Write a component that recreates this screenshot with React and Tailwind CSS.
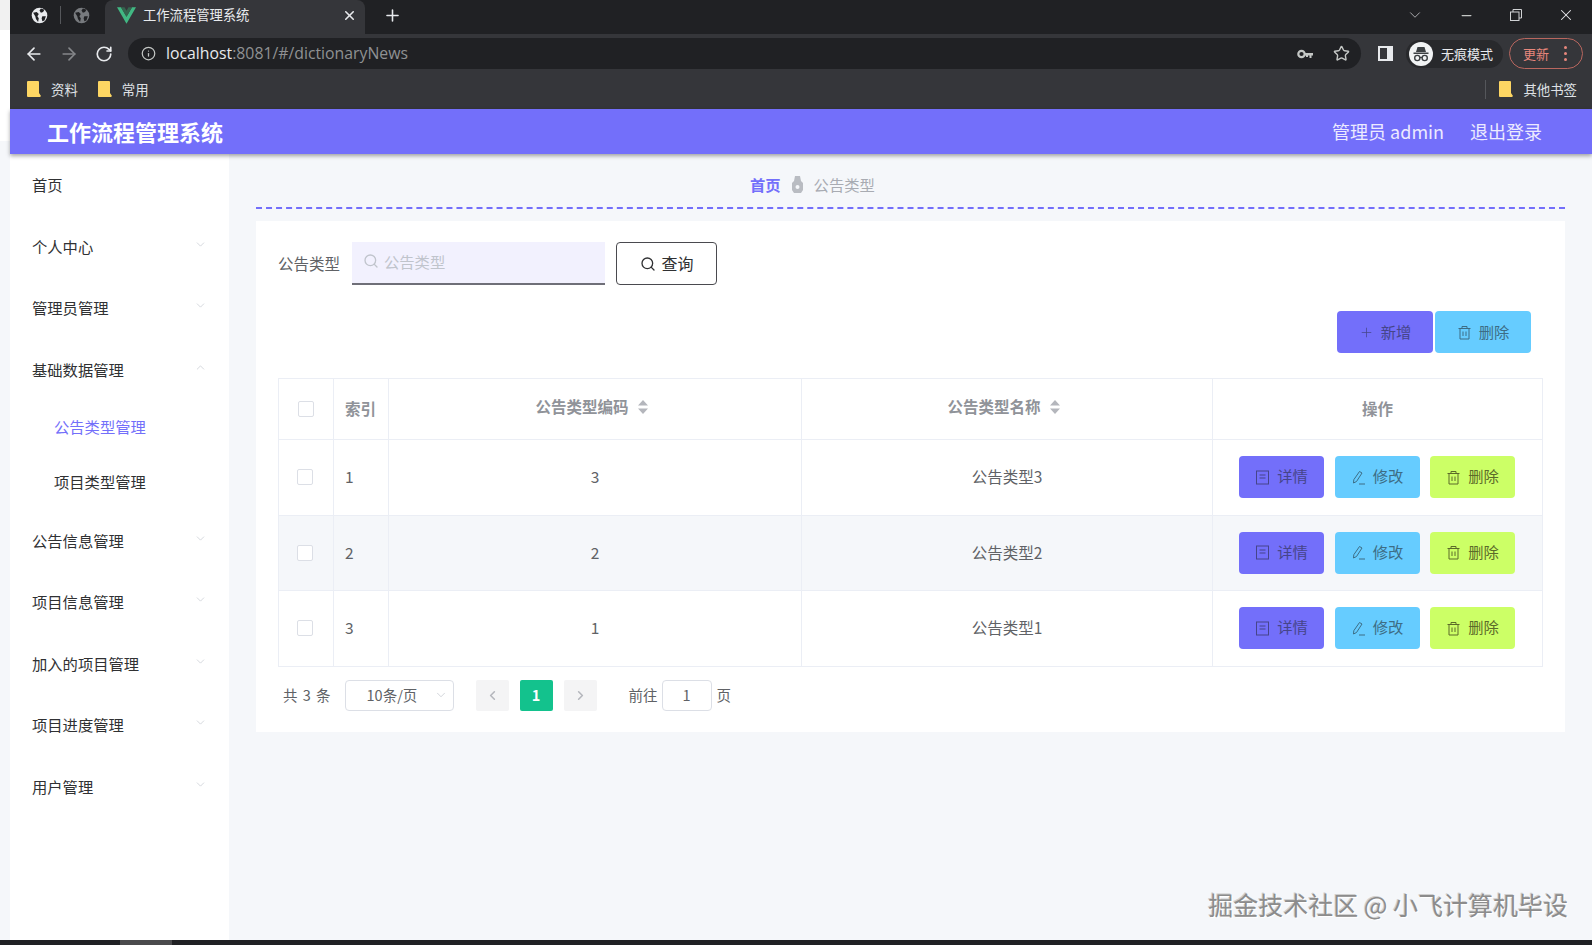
import React from "react";
import { ArrowLeft, ArrowRight, ChevronDown, ChevronLeft, ChevronRight, ChevronUp, Info, Minus, Plus, RotateCw, Search, Star, X } from "lucide-react";

const FONT = { fontFamily: '"Noto Sans CJK SC", "Noto Sans", sans-serif' };

const menus = [
    { name: "首页" },
    { name: "个人中心", arrow: true },
    { name: "管理员管理", arrow: true },
    { name: "基础数据管理", open: true },
    { name: "公告信息管理", arrow: true },
    { name: "项目信息管理", arrow: true },
    { name: "加入的项目管理", arrow: true },
    { name: "项目进度管理", arrow: true },
    { name: "用户管理", arrow: true },
];

const rows = [
    { id: 1, code: 3, name: "公告类型3" },
    { id: 2, code: 2, name: "公告类型2", stripe: true },
    { id: 3, code: 1, name: "公告类型1" },
];

const Globe = ({ color, cut }) => (
    <svg width="17" height="17" viewBox="0 0 24 24">
        <circle cx="12" cy="12" r="11" fill={color} />
        <path d="M3 8l5-1 3 3-2 3 2 3-1 5-3-4-1-4zM14 2l5 2-2 3-3 1-2-3zM16 13l5 0-2 6-3 1-1-4z" fill={cut} />
    </svg>
);

const VueLogo = () => (
    <svg width="19" height="17" viewBox="0 0 24 21">
        <path d="M0 0h5l7 12 7-12h5L12 21z" fill="#41b883" />
        <path d="M5 0h4.500L12 4.500 14.500 0H19l-7 12z" fill="#35654f" />
    </svg>
);

const Folder = () => (
    <svg width="14" height="16" viewBox="0 0 14 16">
        <path d="M0 1a1 1 0 0 1 1-1h10a1 1 0 0 1 1 1v11l2 3-1 1H1a1 1 0 0 1-1-1z" fill="#fdd663" />
    </svg>
);

const KeyIcon = () => (
    <svg width="16" height="10" viewBox="0 0 16 10">
        <circle cx="4.500" cy="5" r="3.200" fill="none" stroke="#c4c7c5" strokeWidth="2.200" />
        <path d="M8 4h8v2.500h-1.500V9h-2V6.500H11V8H9V6.500H8z" fill="#c4c7c5" />
    </svg>
);

const Incognito = () => (
    <svg width="24" height="24" viewBox="0 0 24 24">
        <circle cx="12" cy="12" r="12" fill="#f1f3f4" />
        <path d="M8.500 5h7l1.500 5H7z M4.500 10.500h15v1.500h-15z" fill="#3c4043" />
        <circle cx="8.300" cy="16" r="2.600" fill="none" stroke="#3c4043" strokeWidth="1.400" />
        <circle cx="15.700" cy="16" r="2.600" fill="none" stroke="#3c4043" strokeWidth="1.400" />
        <path d="M10.900 15.500h2.200" stroke="#3c4043" strokeWidth="1.200" />
    </svg>
);

const TicketIcon = ({ color }) => (
    <svg width="15" height="15" viewBox="0 0 15 15" fill="none" stroke={color} strokeWidth="1">
        <rect x="1.500" y="1" width="12" height="13" />
        <path d="M4.500 5h6M4.500 8h6" />
    </svg>
);

const EditIcon = ({ color }) => (
    <svg width="15" height="15" viewBox="0 0 15 15" fill="none" stroke={color} strokeWidth="1">
        <path d="M8.500 1.500l2.500 1.500-5.500 8.500-3 1.500 0.300-3.300zM8 14h6" />
    </svg>
);

const TrashIcon = ({ color }) => (
    <svg width="15" height="15" viewBox="0 0 15 15" fill="none" stroke={color} strokeWidth="1">
        <path d="M1.500 3.500h12M5 3.500V1.500h5v2M3 3.500V14h9V3.500M6 6.500v4.500M9 6.500v4.500" />
    </svg>
);

const BreadcrumbIcon = () => (
    <svg width="13" height="17" viewBox="0 0 13 17">
        <path d="M4 0h5l1 5 2 2v7l-2 3H3l-2-3V7l2-2z" fill="#b9bcc2" />
        <circle cx="6.500" cy="11" r="2" fill="#f5f7fa" />
    </svg>
);

const SortIcon = () => (
    <svg width="10" height="14" viewBox="0 0 10 14" className="ml-[9px]">
        <path d="M5 0l5 5.500H0zM0 8.500h10L5 14z" fill="#b4b6bc" />
    </svg>
);

const ActionButton = ({ bg, color, text, children }) => (
    <button className={`flex h-[42px] w-[85px] items-center justify-center gap-[7px] rounded-[4px] text-[15.300px] ${bg}`} style={{ color }}>
        {children}
        <span className="pb-[3px]">{text}</span>
    </button>
);

const Cell = ({ className, children }) => (
    <div className={`flex items-center justify-center border-r border-[#ebeef5] ${className || ""}`}>{children}</div>
);

const Checkbox = () => <span className="block h-[16px] w-[16px] rounded-[2px] border border-[#dcdfe6] bg-white" />;

const BrowserChrome = () => (
    <>
        {/* Tabs */}
        <div className="flex h-[34px] shrink-0 items-center bg-[#202124] text-[#e8eaed]">
            <div className="mb-[4px] ml-[21px]"><Globe color="#e8eaed" cut="#202124" /></div>
            <div className="mb-[4px] ml-[12px] h-[18px] w-px bg-[#55575b]" />
            <div className="mb-[4px] ml-[12px]"><Globe color="#777a7e" cut="#202124" /></div>
            <div className="ml-[15px] flex h-[34px] w-[260px] items-center rounded-t-[8px] bg-[#35363a] pb-[4px] pl-[12px]">
                <VueLogo />
                <span className="ml-[7px] text-[13.300px]">工作流程管理系统</span>
                <X size={15} strokeWidth={2.500} className="ml-[93px]" />
            </div>
            <Plus size={19} className="mb-[4px] ml-[18px]" />
            <div className="mb-[4px] ml-auto flex items-center">
                <ChevronDown size={18} strokeWidth={1.200} className="text-[#b5b7ba]" />
                <Minus size={15} className="ml-[35px] text-[#c4c7c5]" />
                <svg width="12" height="12" viewBox="0 0 12 12" fill="none" stroke="#d0d2d4" className="ml-[36px]">
                    <rect x="0.500" y="3" width="8.500" height="8.500" />
                    <path d="M3 3V0.500h8.500V9H9" />
                </svg>
                <X size={18} strokeWidth={1.400} className="mr-[17px] ml-[35px] text-[#e8eaed]" />
            </div>
        </div>
        {/* Address bar */}
        <div className="flex h-[41px] shrink-0 items-center bg-[#35363a] pb-[2px] text-[#e8eaed]">
            <ArrowLeft size={20} className="ml-[14px]" />
            <ArrowRight size={20} className="ml-[15px] text-[#85878a]" />
            <RotateCw size={18} strokeWidth={2.200} className="ml-[16px]" />
            <div className="ml-[15px] flex h-[31px] w-[1233px] items-center rounded-full bg-[#202124] pl-[13px]">
                <Info size={15} className="text-[#c4c7c5]" />
                <span className="ml-[10px] text-[15.800px]" style={{ fontFamily: '"Open Sans", sans-serif' }}>
                    localhost<span className="text-[#8f9193]">:8081/#/dictionaryNews</span>
                </span>
                <div className="ml-auto flex items-center pr-[11px]">
                    <KeyIcon />
                    <Star size={17} className="ml-[20px] text-[#c4c7c5]" />
                </div>
            </div>
            <div className="ml-[17px] flex h-[15px] w-[15px] border-2 border-[#e8eaed]">
                <div className="h-full w-[7px] bg-[#35363a]" />
                <div className="h-full flex-1 bg-[#e8eaed]" />
            </div>
            <div className="ml-[13px] flex h-[28px] w-[97px] items-center rounded-full bg-[#28292c] pl-[3px]">
                <Incognito />
                <span className="ml-[8px] text-[13px]">无痕模式</span>
            </div>
            <div className="ml-[6px] flex h-[31px] w-[74px] items-center rounded-full border border-[#b9675f] pl-[13px] text-[13px] text-[#e8877c]">
                更新
                <div className="ml-[15px] flex flex-col gap-[3px]">
                    <span className="h-[3px] w-[3px] rounded-full bg-[#e8877c]" />
                    <span className="h-[3px] w-[3px] rounded-full bg-[#e8877c]" />
                    <span className="h-[3px] w-[3px] rounded-full bg-[#e8877c]" />
                </div>
            </div>
        </div>
        {/* Bookmarks */}
        <div className="flex h-[34px] shrink-0 items-center bg-[#35363a] pb-[6px] text-[13.400px] text-[#dfe1e5]">
            <div className="ml-[17px]"><Folder /></div>
            <span className="ml-[10px]">资料</span>
            <div className="ml-[20px]"><Folder /></div>
            <span className="ml-[10px]">常用</span>
            <div className="ml-auto h-[19px] w-px bg-[#55575b]" />
            <div className="ml-[13px]"><Folder /></div>
            <span className="mr-[15px] ml-[10px]">其他书签</span>
        </div>
    </>
);

const Sidebar = () => (
    <div className="w-[219px] shrink-0 bg-white text-[15.300px] text-[#303133]">
        {menus.map((m) => (
            <div key={m.name}>
                <div className="flex h-[61.500px] items-center justify-between pr-[22px] pl-[22px]">
                    <span>{m.name}</span>
                    {m.arrow && <ChevronDown size={13} strokeWidth={1.200} className="mb-[4px] text-[#c0c4cc]" />}
                    {m.open && <ChevronUp size={13} strokeWidth={1.200} className="mb-[4px] text-[#c0c4cc]" />}
                </div>
                {m.open && (
                    <div className="pb-[1.500px]">
                        <div className="flex h-[54px] items-center pb-[2px] pl-[44px] text-[#736ffa]">公告类型管理</div>
                        <div className="flex h-[54px] items-center pl-[44px]">项目类型管理</div>
                    </div>
                )}
            </div>
        ))}
    </div>
);

const TableBlock = () => (
    <div className="border-t border-l border-[#ebeef5] text-[15.500px] text-[#606266]">
        <div className="grid h-[61px] grid-cols-[55px_55px_413px_411px_330px] border-b border-[#ebeef5] font-bold text-[#909399]">
            <Cell><Checkbox /></Cell>
            <Cell className="justify-start pl-[11px]">索引</Cell>
            <Cell className="pr-[7px] pb-[4px]">公告类型编码<SortIcon /></Cell>
            <Cell className="pr-[7px] pb-[4px]">公告类型名称<SortIcon /></Cell>
            <Cell>操作</Cell>
        </div>
        {rows.map((r) => (
            <div key={r.id} className={`grid h-[75.500px] grid-cols-[55px_55px_413px_411px_330px] border-b border-[#ebeef5] ${r.stripe ? "bg-[#f5f7fa]" : "bg-white"}`}>
                <Cell className="pr-[3px]"><Checkbox /></Cell>
                <Cell className="justify-start pb-[1px] pl-[11px]">{r.id}</Cell>
                <Cell className="pb-[1px]">{r.code}</Cell>
                <Cell className="pb-[1px]">{r.name}</Cell>
                <Cell className="gap-[10.500px] pr-[1px]">
                    <ActionButton bg="bg-[#736ffa]" color="#46458a" text="详情"><TicketIcon color="#46458a" /></ActionButton>
                    <ActionButton bg="bg-[#66ccff]" color="#3d6d85" text="修改"><EditIcon color="#3d6d85" /></ActionButton>
                    <ActionButton bg="bg-[#ccff66]" color="#5c6b2a" text="删除"><TrashIcon color="#5c6b2a" /></ActionButton>
                </Cell>
            </div>
        ))}
    </div>
);

const Pagination = () => (
    <div className="mt-[13px] flex h-[32px] items-center text-[14.500px] text-[#606266]">
        <span className="ml-[5px] pb-[2px] [word-spacing:2px]">共 3 条</span>
        <div className="ml-[14px] flex h-[31px] w-[109px] items-center rounded-[4px] border border-[#dcdfe6] pb-[2px] pl-[21px]">
            10条/页
            <ChevronDown size={14} strokeWidth={1.200} className="mr-[5px] ml-auto text-[#c0c4cc]" />
        </div>
        <div className="ml-[22px] flex h-[31px] w-[33px] items-center justify-center rounded-[2px] bg-[#f4f4f5] text-[#b4b6bc]"><ChevronLeft size={15} strokeWidth={2.500} /></div>
        <div className="ml-[11px] flex h-[31px] w-[33px] items-center justify-center rounded-[2px] bg-[#13c28d] pb-[2px] font-bold text-white">1</div>
        <div className="ml-[11px] flex h-[31px] w-[33px] items-center justify-center rounded-[2px] bg-[#f4f4f5] text-[#b4b6bc]"><ChevronRight size={15} strokeWidth={2.500} /></div>
        <span className="ml-[32px] pb-[2px]">前往</span>
        <div className="ml-[4px] flex h-[31px] w-[50px] items-center justify-center rounded-[4px] border border-[#dcdfe6] pb-[2px]">1</div>
        <span className="ml-[5px] pb-[2px]">页</span>
    </div>
);

const Content = () => (
    <div className="relative flex-1 bg-[#f5f7fa] pr-[28px] pl-[27px]">
        {/* Breadcrumb */}
        <div className="flex h-[55px] items-center border-b-2 border-dashed border-[#736ffa] pt-[8px] pl-[494px] text-[15.300px]">
            <span className="font-bold text-[#736ffa]">首页</span>
            <span className="mx-[10px]"><BreadcrumbIcon /></span>
            <span className="text-[#a8abb2]">公告类型</span>
        </div>

        <div className="mt-[12px] h-[511px] bg-white pt-[21px] pr-[22px] pl-[22px]">
            {/* Search */}
            <div className="flex h-[43px] items-center">
                <span className="text-[15.500px] text-[#606266]">公告类型</span>
                <div className="ml-[12px] flex h-[43px] w-[253px] items-center border-b-2 border-[#6f6f78] bg-[#f2f1fe] pb-[3px] pl-[11px] text-[15.300px] text-[#c0c4cc]">
                    <Search size={16} />
                    <span className="ml-[5px]">公告类型</span>
                </div>
                <button className="ml-[11px] flex h-[43px] w-[101px] items-center justify-center gap-[6px] rounded-[4px] border border-[#4a4a4f] text-[16px] text-[#303133]">
                    <Search size={16} />
                    <span className="pb-[1px]">查询</span>
                </button>
            </div>

            {/* Toolbar */}
            <div className="mt-[26px] flex justify-end gap-[2px] pr-[12px]">
                <button className="flex h-[42px] w-[96px] items-center justify-center gap-[7px] rounded-[4px] bg-[#736ffa] text-[15.300px] text-[#46458a]">
                    <Plus size={15} strokeWidth={1.200} />
                    <span className="pb-[2px]">新增</span>
                </button>
                <button className="flex h-[42px] w-[96px] items-center justify-center gap-[7px] rounded-[4px] bg-[#66ccff] text-[15.300px] text-[#3d6d85]">
                    <TrashIcon color="#3d6d85" />
                    <span className="pb-[2px]">删除</span>
                </button>
            </div>

            <div className="mt-[25px]">
                <TableBlock />
                <Pagination />
            </div>
        </div>

        {/* Watermark */}
        <div className="absolute right-[25px] bottom-[23px] text-[25px] leading-none text-[#8c8c8c]" style={{ textShadow: "1px 1px 0 #fff, -1px -1px 0 #cfcfcf" }}>
            掘金技术社区 @ 小飞计算机毕设
        </div>
    </div>
);

const App = () => {
    return (
        <div className="flex h-[945px] w-[1592px] flex-col overflow-hidden bg-white" style={FONT}>
            <div className="flex min-h-0 flex-1">
                <div className="flex w-[10px] shrink-0 flex-col">
                    <div className="h-[30px] bg-[#f1f1f1]" />
                    <div className="h-[111px] bg-white" />
                    <div className="flex-1 bg-[#f5f7fa]" />
                </div>
                <div className="flex min-w-0 flex-1 flex-col">
                    <BrowserChrome />
                    {/* Site header */}
                    <div className="relative z-10 flex h-[45px] shrink-0 items-center justify-between bg-[#736ffa] pr-[50px] pl-[37px] text-white shadow-[0_2px_4px_rgba(0,0,0,0.35)]">
                        <span className="text-[22px] font-bold">工作流程管理系统</span>
                        <div className="flex items-center gap-[26px] text-[18px] text-[#eceaff]">
                            <span>管理员 admin</span>
                            <span>退出登录</span>
                        </div>
                    </div>
                    <div className="flex min-h-0 flex-1">
                        <Sidebar />
                        <Content />
                    </div>
                </div>
            </div>
            {/* Bottom scrollbar */}
            <div className="h-[5px] shrink-0 bg-[#202124]">
                <div className="ml-[120px] h-full w-[52px] bg-[#4a4a4c]" />
            </div>
        </div>
    );
};

export default App;
